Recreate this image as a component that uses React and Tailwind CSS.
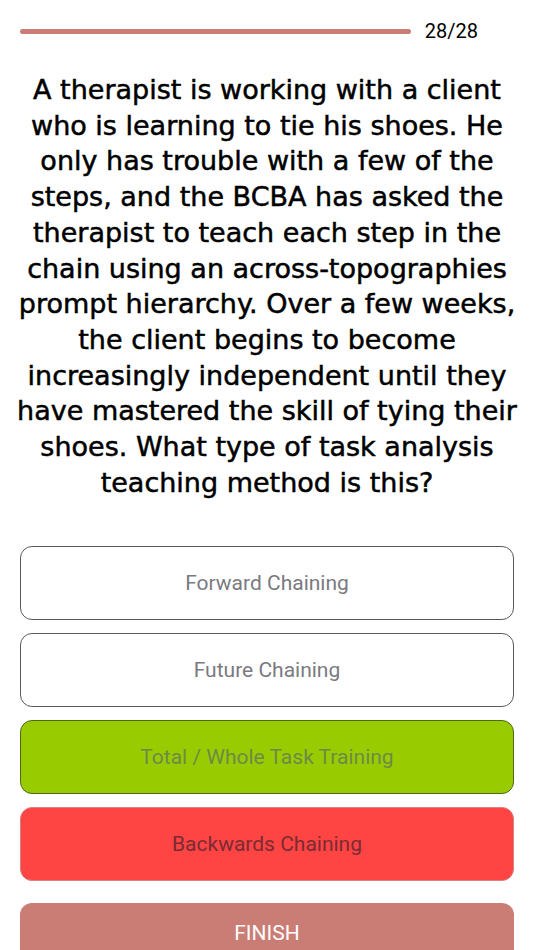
const lines = [
  'A therapist is working with a client',
  'who is learning to tie his shoes. He',
  'only has trouble with a few of the',
  'steps, and the BCBA has asked the',
  'therapist to teach each step in the',
  'chain using an across-topographies',
  'prompt hierarchy. Over a few weeks,',
  'the client begins to become',
  'increasingly independent until they',
  'have mastered the skill of tying their',
  'shoes. What type of task analysis',
  'teaching method is this?',
];

const answers = [
  { label: 'Forward Chaining', cls: 'bg-white border-[#5a5a5a] text-[#7a7a7f]' },
  { label: 'Future Chaining', cls: 'bg-white border-[#5a5a5a] text-[#7a7a7f]' },
  { label: 'Total / Whole Task Training', cls: 'bg-[#99cc00] border-[#4d6a1c] text-[#6e8a45]' },
  { label: 'Backwards Chaining', cls: 'bg-[#ff4444] border-[#d98080] text-[#7a2b33]' },
];

export default function App() {
  return (
    <div className="w-[534px] h-[950px] overflow-hidden bg-white">
      <div className="flex items-center pl-5 pr-14 pt-[19px]">
        <div className="flex-1 h-[5px] rounded-full bg-[#c97d74]" />
        <span className="ml-[14px] text-[20px] leading-6 text-black" style={{ fontFamily: 'Roboto, "Liberation Sans", sans-serif' }}>28/28</span>
      </div>
      <p
        className="mt-[29px] text-center text-[27px] leading-[35.7px] text-black whitespace-nowrap [-webkit-text-stroke:0.5px_black]"
        style={{ fontFamily: '"DejaVu Sans", Verdana, sans-serif' }}
      >
        {lines.map((l, i) => (
          <span key={i} className="block">{l}</span>
        ))}
      </p>
      <div className="mt-[46px] px-5 flex flex-col gap-[13px]" style={{ fontFamily: 'Roboto, "Liberation Sans", sans-serif' }}>
        {answers.map((a) => (
          <button key={a.label} className={`h-[74px] w-full rounded-[12px] border-[1.5px] text-[21px] ${a.cls}`}>
            {a.label}
          </button>
        ))}
        <button className="mt-[9px] h-[75px] w-full rounded-[12px] bg-[#c97d74] text-white text-[21px] leading-7 flex justify-center pt-[16px]">
          FINISH
        </button>
      </div>
    </div>
  );
}
